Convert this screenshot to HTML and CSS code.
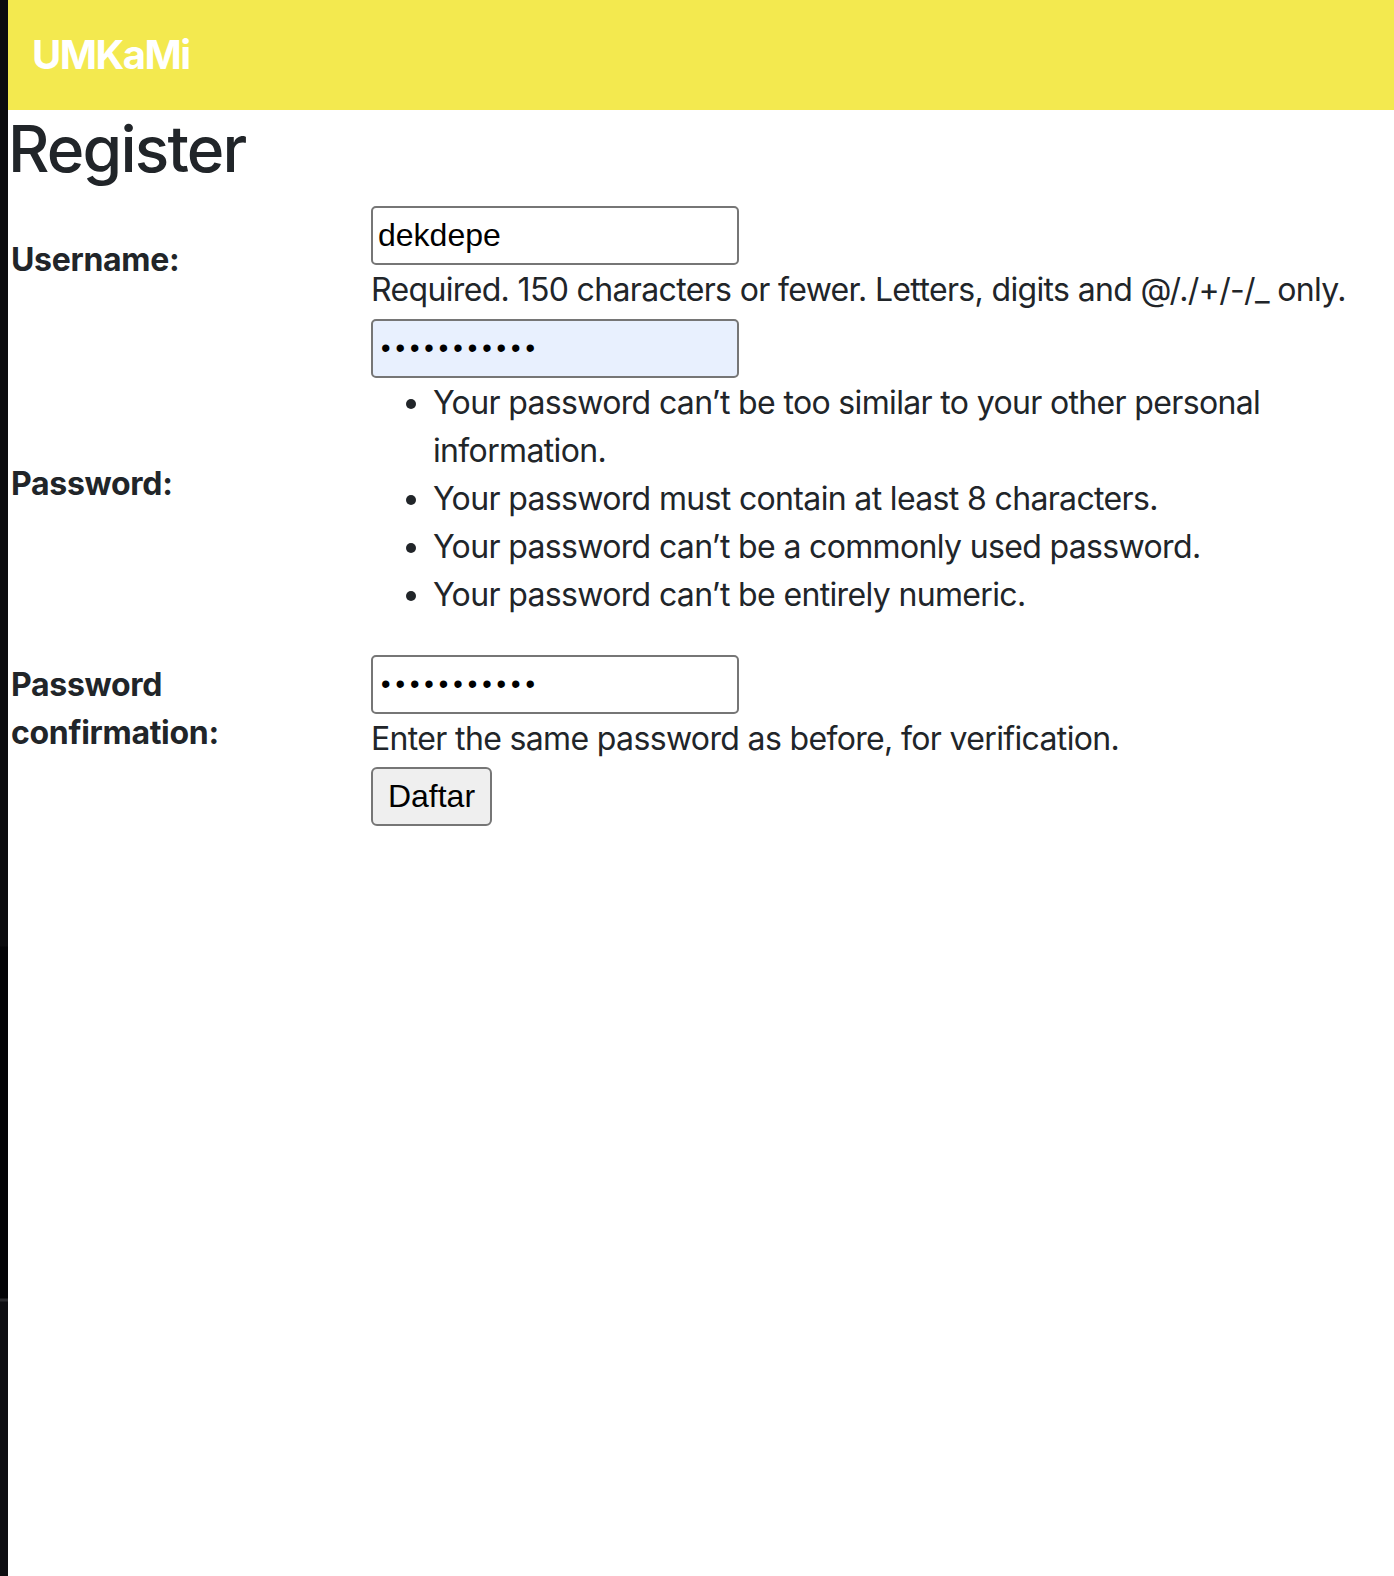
FILE: index.html
```html
<!DOCTYPE html>
<html lang="en">
<head>
<meta charset="utf-8">
<title>Register</title>
<link rel="stylesheet" href="styles.css">
</head>
<body>
<div class="side"></div>
<div class="page">
  <header class="navbar">
    <span class="brand">UMKaMi</span>
  </header>
  <h2 class="title">Register</h2>
  <form class="form">
    <table class="form-table">
      <tr>
        <th class="label-cell"><label for="id_username">Username:</label></th>
        <td class="field-cell">
          <input class="field" type="text" id="id_username" value="dekdepe">
          <span class="helptext nowrap">Required. 150 characters or fewer. Letters, digits and @/./+/-/_ only.</span>
        </td>
      </tr>
      <tr>
        <th class="label-cell"><label for="id_password1">Password:</label></th>
        <td class="field-cell">
          <input class="field autofill" type="password" id="id_password1" value="dekdepe1234">
          <ul class="rules">
            <li>Your password can’t be too similar to your other personal information.</li>
            <li>Your password must contain at least 8 characters.</li>
            <li>Your password can’t be a commonly used password.</li>
            <li>Your password can’t be entirely numeric.</li>
          </ul>
        </td>
      </tr>
      <tr>
        <th class="label-cell"><label for="id_password2">Password confirmation:</label></th>
        <td class="field-cell">
          <input class="field" type="password" id="id_password2" value="dekdepe1234">
          <span class="helptext">Enter the same password as before, for verification.</span>
        </td>
      </tr>
    </table>
    <div class="actions">
      <button class="btn" type="button">Daftar</button>
    </div>
  </form>
</div>
</body>
</html>
```
FILE: styles.css
```css
html, body {
  margin: 0;
  padding: 0;
}
body {
  display: flex;
  min-height: 1576px;
  background: #0a0a0d;
  font-family: Inter, "Noto Sans", "DejaVu Sans", sans-serif;
  font-size: 32px;
  line-height: 48px;
  color: #212529;
}
.side {
  width: 8px;
  flex: 0 0 8px;
  background: linear-gradient(to bottom, #0b0b0e 0, #0b0b0e 946px, #040407 947px, #040407 1298px, #2a2a2e 1299px, #2a2a2e 1301px, #0e0e12 1302px);
}
.page {
  flex: 1;
  background: #ffffff;
  min-height: 1576px;
}
.navbar {
  height: 110px;
  background: #f3e94f;
  display: flex;
  align-items: center;
  padding-left: 24px;
  box-sizing: border-box;
}
.brand {
  color: #ffffff;
  font-weight: 700;
  font-size: 40px;
  line-height: 60px;
  letter-spacing: -1.5px;
}
.title {
  margin: 0 0 15px 0;
  font-size: 64px;
  font-weight: 500;
  line-height: 77px;
  letter-spacing: -1.8px;
}
.form {
  margin: 0;
}
.form-table {
  border-spacing: 2px;
  border-collapse: separate;
  margin: 0;
}
.label-cell {
  width: 356px;
  padding: 1px;
  text-align: left;
  vertical-align: middle;
  font-weight: 700;
  letter-spacing: -0.3px;
}
.field-cell {
  padding: 1px;
  vertical-align: middle;
}
.field {
  display: block;
  box-sizing: border-box;
  width: 368px;
  height: 59px;
  margin: 1px 0 1px 0;
  padding: 0 5px;
  border: 2px solid #767676;
  border-radius: 5px;
  background: #ffffff;
  font-family: "Liberation Sans", Arial, sans-serif;
  font-size: 32px;
  color: #000000;
  outline: none;
}
.field[type="password"] {
  font-size: 27px;
  letter-spacing: 5px;
  padding-left: 8px;
}
.field.autofill {
  background: #e8f0fe;
}
.helptext {
  display: block;
  letter-spacing: -0.65px;
}
.nowrap {
  white-space: nowrap;
}
.rules {
  margin: 0 0 31px 0;
  padding-left: 62px;
  letter-spacing: -0.65px;
}
.actions {
  padding-left: 363px;
  margin-top: 1px;
}
.btn {
  box-sizing: border-box;
  width: 121px;
  height: 59px;
  padding: 0;
  border: 2px solid #767676;
  border-radius: 6px;
  background: #efefef;
  font-family: "Liberation Sans", Arial, sans-serif;
  font-size: 32px;
  color: #000000;
}
```
